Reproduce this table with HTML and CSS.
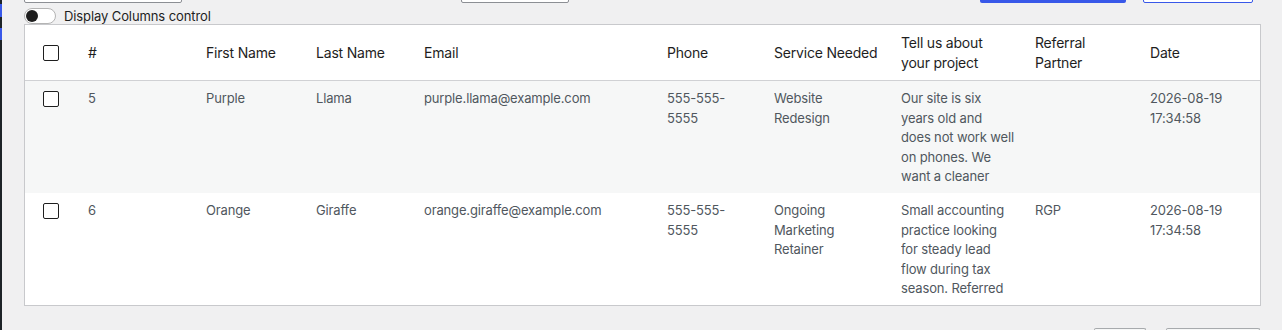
FILE: index.html
```html
<!DOCTYPE html>
<html lang="en">
<head>
<meta charset="utf-8">
<title>Submissions</title>
<link rel="stylesheet" href="styles.css">
</head>
<body>
<div class="sidebar">
  <span class="menu-hl first"></span>
  <span class="menu-hl second"></span>
</div>
<main class="main">
  <div class="toolbar">
    <div class="search-box"></div>
    <div class="select-box"></div>
    <div class="btn-primary"></div>
    <div class="btn-secondary"></div>
  </div>
  <div class="toggle-row">
    <span class="toggle"><span class="knob"></span></span>
    <span class="toggle-label">Display Columns control</span>
  </div>
  <div class="table-wrap">
    <table class="data-table">
      <colgroup>
        <col class="w-cb"><col class="w-id"><col class="w-first"><col class="w-last"><col class="w-email">
        <col class="w-phone"><col class="w-service"><col class="w-tell"><col class="w-ref"><col class="w-date">
      </colgroup>
      <thead>
        <tr>
          <th class="cb"><span class="checkbox"></span></th>
          <th>#</th>
          <th>First Name</th>
          <th>Last Name</th>
          <th>Email</th>
          <th>Phone</th>
          <th><div class="cell head-service">Service Needed</div></th>
          <th><div class="cell head-tell">Tell us about your project</div></th>
          <th><div class="cell ref">Referral Partner</div></th>
          <th>Date</th>
        </tr>
      </thead>
      <tbody>
        <tr class="alt">
          <td class="cb"><span class="checkbox"></span></td>
          <td>5</td>
          <td>Purple</td>
          <td>Llama</td>
          <td>purple.llama@example.com</td>
          <td><div class="cell phone">555-555-5555</div></td>
          <td><div class="cell service">Website Redesign</div></td>
          <td><div class="cell tell">Our site is six years old and does not work well on phones. We want a cleaner</div></td>
          <td><div class="cell ref"></div></td>
          <td><div class="cell date">2026-08-19 17:34:58</div></td>
        </tr>
        <tr>
          <td class="cb"><span class="checkbox"></span></td>
          <td>6</td>
          <td>Orange</td>
          <td>Giraffe</td>
          <td>orange.giraffe@example.com</td>
          <td><div class="cell phone">555-555-5555</div></td>
          <td><div class="cell service">Ongoing Marketing Retainer</div></td>
          <td><div class="cell tell">Small accounting practice looking for steady lead flow during tax season. Referred</div></td>
          <td><div class="cell ref">RGP</div></td>
          <td><div class="cell date">2026-08-19 17:34:58</div></td>
        </tr>
      </tbody>
    </table>
  </div>
  <div class="pager">
    <div class="pager-btn small"></div>
    <div class="pager-btn wide"></div>
  </div>
</main>
</body>
</html>
```
FILE: styles.css
```css
html, body {
  margin: 0;
  height: 330px;
  overflow: hidden;
}
body {
  display: flex;
  background: #f0f0f1;
  font-family: Inter, "Noto Sans", sans-serif;
  color: #1e1e1e;
}
.sidebar {
  width: 2px;
  flex: none;
  background: #1d2327;
  display: flex;
  flex-direction: column;
}
.menu-hl {
  display: block;
  background: #3858e9;
  width: 2px;
}
.menu-hl.first { margin-top: 4px; height: 13px; }
.menu-hl.second { margin-top: 11px; height: 12px; }

.main {
  flex: 1;
  padding: 0 21px 0 22px;
  min-width: 0;
}
.toolbar {
  display: flex;
  height: 36px;
  margin-top: -33px;
  padding-right: 8px;
}
.search-box {
  width: 156px;
  height: 34px;
  border: 1px solid #8c8f94;
  border-radius: 2px;
  background: #fff;
}
.select-box {
  margin-left: 279px;
  width: 106px;
  height: 34px;
  border: 1px solid #8c8f94;
  border-radius: 2px;
  background: #fff;
}
.btn-primary {
  margin-left: auto;
  width: 146px;
  height: 36px;
  background: #3858e9;
  border-radius: 2px;
}
.btn-secondary {
  margin-left: 17px;
  width: 108px;
  height: 34px;
  border: 1px solid #3858e9;
  border-radius: 2px;
  background: #fff;
}

.toggle-row {
  display: flex;
  align-items: center;
  gap: 8px;
  margin-top: 5px;
  height: 16px;
}
.toggle {
  position: relative;
  width: 30px;
  height: 14px;
  border: 1px solid #b4b4b4;
  border-radius: 9px;
  background: #fff;
  flex: none;
}
.knob {
  position: absolute;
  left: 1px;
  top: 1px;
  width: 12px;
  height: 12px;
  border-radius: 50%;
  background: #1e1e1e;
}
.toggle-label {
  font-size: 13px;
  line-height: 16px;
  color: #1e1e1e;
  letter-spacing: -0.1px;
}

.table-wrap {
  width: 1237px;
  box-sizing: border-box;
  border: 1px solid #c8c9cc;
  background: #fff;
}
.data-table {
  width: 1235px;
  border-collapse: collapse;
  table-layout: fixed;
}
.w-cb { width: 55px; }
.w-id { width: 118px; }
.w-first { width: 110px; }
.w-last { width: 108px; }
.w-email { width: 243px; }
.w-phone { width: 107px; }
.w-service { width: 127px; }
.w-tell { width: 134px; }
.w-ref { width: 115px; }
.w-date { width: 118px; }

.data-table th {
  text-align: left;
  font-weight: 400;
  font-size: 14px;
  line-height: 20px;
  color: #1e1e1e;
  padding: 8px 8px 7px;
  vertical-align: middle;
  border-bottom: 1px solid #d0d1d4;
  height: 40px;
  letter-spacing: -0.2px;
}
.data-table td {
  font-size: 13px;
  line-height: 19.5px;
  color: #50575e;
  padding: 8px 8px 6.5px;
  vertical-align: top;
  letter-spacing: -0.15px;
}
.data-table tr.alt td {
  background: #f6f7f7;
}
.data-table .cb {
  padding-left: 18px;
  padding-right: 0;
}
.cell {
  max-height: 97.5px;
  overflow: hidden;
}
.cell.phone { max-width: 80px; }
.cell.service { max-width: 100px; }
.cell.head-service { max-width: 110px; }
.cell.tell { max-width: 114px; }
.cell.head-tell { max-width: 104px; }
.cell.ref { max-width: 92px; }
.cell.date { max-width: 100px; }

.checkbox {
  display: block;
  width: 14px;
  height: 14px;
  border: 1px solid #1e1e1e;
  border-radius: 2px;
  background: #fff;
  margin-top: 2px;
}
thead .checkbox { margin-top: 0; }

.pager {
  display: flex;
  justify-content: flex-end;
  gap: 20px;
  margin-top: 22px;
  padding-right: 1px;
}
.pager-btn {
  height: 1px;
  border: 1px solid #a7aaad;
  border-bottom: 0;
  border-radius: 2px 2px 0 0;
  background: #f6f7f7;
}
.pager-btn.small { width: 50px; }
.pager-btn.wide { width: 92px; }
```
